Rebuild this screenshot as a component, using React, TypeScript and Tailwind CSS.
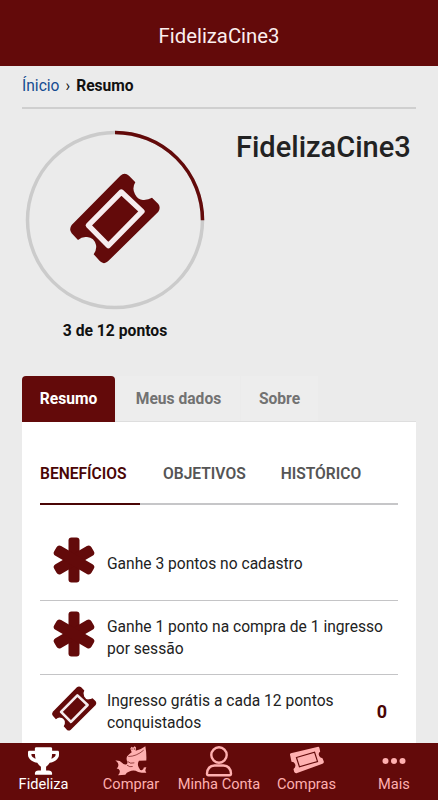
import { useState } from "react";
import type { ReactNode } from "react";
import { FaTrophy } from "react-icons/fa";

const POINTS = 3;
const GOAL = 12;

function TicketIcon({ className }: { className?: string }) {
  return (
    <svg viewBox="160 150 285 285" className={className}>
      <path
        fill="#630a0a"
        d="M317 164Q330 153 343 164L362 184Q351 201 361 220Q371 239 388 237Q402 236 412 230L431 249Q439 260 431 272L280 421Q268 432 256 421L237 400Q247 385 244 372Q239 350 217 348Q202 346 190 357L171 337Q162 325 171 312Z"
      />
      <path
        fill="none"
        stroke="#f6ecee"
        strokeWidth="16"
        strokeLinejoin="round"
        d="M320 213L382 271L281 374L221 313Z"
      />
    </svg>
  );
}

function AsteriskIcon({ className }: { className?: string }) {
  return (
    <svg viewBox="-66 -69 132 138" className={className} fill="#630a0a">
      <rect x="-16.5" y="-67.5" width="33" height="135" rx="9" />
      <rect x="-17" y="-64.5" width="34" height="129" rx="10" transform="rotate(60)" />
      <rect x="-17" y="-64.5" width="34" height="129" rx="10" transform="rotate(-60)" />
    </svg>
  );
}

function MascotIcon() {
  return (
    <svg viewBox="0 0 96 92" className="h-[31px] w-8">
      <path
        fill="#ffb0b0"
        d="M46 10L50 5L54 8L59 3L63 7L62 17Q78 13 91 3Q95 24 94 46L72 47Q66 57 71 66Q74 75 80 75Q87 73 86 67L94 66Q91 72 91 77L94 83L80 83Q68 82 62 77Q52 75 43 79Q34 82 31 89L9 90Q16 84 14 76Q12 70 5 70Q11 65 10 58Q9 50 1 46Q15 45 21 53Q27 60 35 57Q38 54 37 50Q33 42 36 34Q41 27 50 21Z"
      />
      <path
        d="M51 10V14M58 9V14M40 34Q64 34 86 15M38 49Q46 57 58 53M36 60Q44 67 53 64"
        stroke="#630a0a"
        strokeWidth="2"
        fill="none"
      />
    </svg>
  );
}

function UserIcon() {
  return (
    <svg viewBox="0 0 28 32" className="h-8 w-7" fill="none" stroke="#ffb0b0" strokeWidth="2.4">
      <circle cx="14" cy="10" r="7.7" />
      <path d="M9.5 20.5H18.5Q25.5 21 26 28.5Q26 30.3 24.5 30.3H3.5Q2 30.3 2 28.5Q2.5 21 9.5 20.5Z" />
    </svg>
  );
}

function NavTicketIcon() {
  return (
    <svg viewBox="0 0 108 88" className="h-[29px] w-9">
      <path
        fill="#ffb0b0"
        d="M5 22L85 3Q91 1 92 7L94 17Q87 22 91 30Q94 36 101 37L105 47Q106 52 101 54L24 82Q17 84 15 78L13 70Q21 64 18 55Q15 48 7 48L3 29Q1 24 5 22Z"
      />
      <path d="M22 35L77 19L86 47L31 63Z" fill="none" stroke="#630a0a" strokeWidth="3.5" />
    </svg>
  );
}

function DotsIcon() {
  return (
    <svg viewBox="0 0 24 8" className="h-2 w-6" fill="#ffb0b0">
      <circle cx="3.5" cy="4" r="3" />
      <circle cx="12" cy="4" r="3" />
      <circle cx="20.5" cy="4" r="3" />
    </svg>
  );
}

function ProgressRing() {
  const r = 87.5;
  const length = 2 * Math.PI * r;
  return (
    <div className="grid h-[180px] w-[180px] place-items-center">
      <svg viewBox="0 0 180 180" className="col-start-1 row-start-1 h-full w-full -rotate-90" fill="none" strokeWidth="3.5">
        <circle cx="90" cy="90" r={r} stroke="#cbcbcb" />
        <circle cx="90" cy="90" r={r} stroke="#630a0a" strokeDasharray={`${(length * POINTS) / GOAL} ${length}`} />
      </svg>
      <TicketIcon className="col-start-1 row-start-1 mb-1 h-[95px] w-[95px]" />
    </div>
  );
}

interface BenefitProps {
  icon: ReactNode;
  text: string;
  count?: number;
}

function Benefit({ icon, text, count }: BenefitProps) {
  return (
    <li className="flex h-[74px] items-center border-b border-[#c4c4c6]">
      <div className="flex w-[67px] shrink-0 justify-center pb-[7px]">{icon}</div>
      <p className="w-[281px] shrink-0 text-[15.6px] leading-[22px] text-[#222]">{text}</p>
      {count !== undefined && (
        <span className="-ml-10 flex-1 pr-[11px] text-right text-lg font-bold text-[#4a0505]">{count}</span>
      )}
    </li>
  );
}

const navItems = [
  { label: "Fideliza", width: "w-[87px]", icon: <FaTrophy className="h-[28px] w-[31px]" /> },
  { label: "Comprar", width: "w-[88px]", icon: <MascotIcon /> },
  { label: "Minha Conta", width: "w-[88px]", icon: <UserIcon /> },
  { label: "Compras", width: "w-[87px]", icon: <NavTicketIcon /> },
  { label: "Mais", width: "w-[88px]", icon: <DotsIcon /> },
];

const sections = ["BENEFÍCIOS", "OBJETIVOS", "HISTÓRICO"];

export default function App() {
  const [section, setSection] = useState(0);

  return (
    <div className="flex h-[800px] w-[438px] flex-col overflow-hidden bg-[#ebebeb] font-['Roboto',sans-serif] text-[#111]">
      <header className="flex h-[66px] shrink-0 items-center justify-center bg-[#630a0a] pt-1.5">
        <h1 className="text-[20.3px] text-[#fbeeee]">FidelizaCine3</h1>
      </header>

      <main className="min-h-0 flex-1 overflow-hidden px-[22px]">
        <nav className="flex h-[43px] items-center gap-1.5 border-b-2 border-[#cfcfcf] text-[15.6px]">
          <a className="text-[#164b91]">Ínicio</a>
          <span>›</span>
          <strong className="font-bold">Resumo</strong>
        </nav>

        <section className="flex h-[267px] pt-[21px]">
          <div className="ml-[3px] flex w-[180px] flex-col items-center">
            <ProgressRing />
            <p className="mt-[9px] text-[15.7px] font-bold">{POINTS} de {GOAL} pontos</p>
          </div>
          <h2 className="-mt-[3px] ml-[31px] text-[29px] leading-10 font-medium text-[#222]">FidelizaCine3</h2>
        </section>

        <div className="flex h-[46px] border-b border-[#dedede] text-[15.6px] font-bold text-[#727272]">
          <button className="h-[46px] w-[93px] rounded-t bg-[#630a0a] pt-0.5 text-white">Resumo</button>
          <button className="ml-[2px] w-[123px] bg-[#ededed] pt-0.5">Meus dados</button>
          <button className="ml-[1px] w-[77px] bg-[#ededed] pt-0.5">Sobre</button>
        </div>

        <section className="h-[400px] bg-white px-[18px] pt-7">
          <div className="flex h-[55px] border-b-2 border-[#c6c6c8] text-[15.6px] font-semibold text-[#555]">
            {sections.map((name, i) => (
              <button
                key={name}
                onClick={() => setSection(i)}
                className={
                  i === section
                    ? "mr-[23px] h-[55px] w-[100px] shrink-0 border-b-2 border-[#4a0505] pb-1 text-left text-[#4a0505]"
                    : "mr-[35px] h-[55px] shrink-0 pb-1.5"
                }
              >
                {name}
              </button>
            ))}
          </div>
          <ul className="pt-[22px]">
            <Benefit icon={<AsteriskIcon className="h-[46px] w-11" />} text="Ganhe 3 pontos no cadastro" />
            <Benefit icon={<AsteriskIcon className="h-[46px] w-11" />} text="Ganhe 1 ponto na compra de 1 ingresso por sessão" />
            <Benefit icon={<TicketIcon className="ml-px h-[47px] w-[47px]" />} text="Ingresso grátis a cada 12 pontos conquistados" count={0} />
          </ul>
        </section>
      </main>

      <footer className="flex h-[57px] shrink-0 bg-[#630a0a] text-[14.6px] text-[#ffb0b0]">
        {navItems.map((item, i) => (
          <a key={item.label} className={`flex flex-col items-center ${item.width} ${i === 0 ? "text-white" : ""}`}>
            <div className="flex h-[35px] items-center justify-center">{item.icon}</div>
            <span className="leading-[13px] whitespace-nowrap">{item.label}</span>
          </a>
        ))}
      </footer>
    </div>
  );
}
